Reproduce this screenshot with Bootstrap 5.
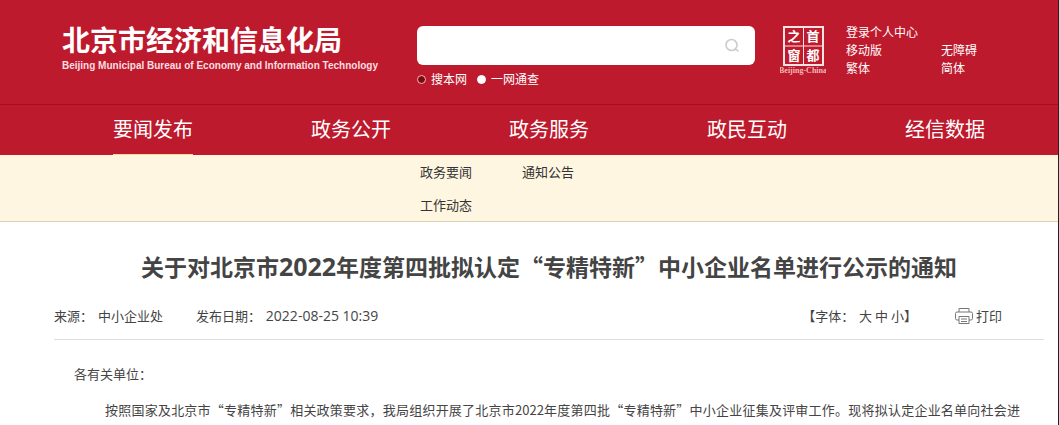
<!DOCTYPE html>
<html lang="zh-CN">
<head>
<meta charset="utf-8">
<meta name="viewport" content="width=device-width, initial-scale=1">
<title>北京市经济和信息化局</title>
<link rel="stylesheet" href="https://cdn.jsdelivr.net/npm/bootstrap@5.3.0/dist/css/bootstrap.min.css">
<style>
  body { font-family: "Noto Sans CJK SC", sans-serif; font-size: 13px; line-height: 18px; color: #444; border-right: 1px solid #222; min-height: 100vh; }
  a { color: inherit; text-decoration: none; }
  .page-gutter { padding-left: 54px; padding-right: 14px; }
  .site-head { background: #be1a2d; color: #fff; height: 105px; border-bottom: 1px solid #a50f1f; }
  .brand { width: 363px; padding: 18px 0 0 8px; }
  .brand-zh { font-size: 28px; line-height: 42px; font-weight: 700; }
  .brand-en { font: 700 10px/12px "Liberation Sans", Arial, sans-serif; color: #fbdfe0; white-space: nowrap; }
  .search-area { width: 338px; padding-top: 26px; }
  .search-box { height: 39px; border-radius: 6px; background: #fff; padding-right: 15px; }
  .search-box input { border: 0; outline: 0; background: transparent; height: 100%; padding: 0 12px; min-width: 0; }
  .search-box button { border: 0; background: none; padding: 0; line-height: 0; }
  .scope { font-size: 12px; line-height: 16px; margin-top: 6px; gap: 10px; }
  .scope label { display: flex; align-items: center; gap: 5px; }
  .scope input { appearance: none; width: 9px; height: 9px; margin: 0; border: 1px solid #fff; border-radius: 50%; background: #fff; }
  .scope input:checked { background: #7c0a12; border-color: #f6b7b0; }
  .seal { margin: 24px 0 0 25px; width: 46px; }
  .quick { margin: 23px 0 0 20px; font-size: 12px; line-height: 18px; display: grid; grid-template-columns: 95px auto; align-content: start; }
  .quick a:first-child { grid-column: span 2; }
  .main-nav { background: #be1a2d; color: #fff; font-size: 20px; line-height: 48px; }
  .main-nav a { display: inline-block; height: 50px; vertical-align: top; border-bottom: 1px solid transparent; }
  .main-nav a.active { border-color: #f3d9a0; }
  .sub-nav { background: #fef6e0; border-bottom: 1px solid #d9d3b4; height: 67px; color: #333; line-height: 33px; }
  .sub-grid { display: grid; grid-template-columns: 102px auto; justify-content: start; padding-left: 366px; }
  h1 { font-size: 23px; line-height: 34px; font-weight: 700; margin: 27px 0 0; }
  .year { font-family: "Open Sans", sans-serif; font-size: 25px; line-height: 1; }
  .meta { margin-top: 24px; padding: 0 42px 14px 0; border-bottom: 1px solid #ddd; }
  .source { margin-right: 33px; }
  .stamp { font-family: "Open Sans", sans-serif; font-size: 14px; margin-left: 2px; }
  .label-gap { margin-right: 2px; }
  .print { margin-left: 38px; gap: 3px; }
  .article { padding: 25px 24px 0 20px; }
  .article p { margin: 0 0 18px; }
  .lead-line { padding-left: 31px; text-align: justify; text-align-last: justify; white-space: nowrap; }
</style>
</head>
<body>
<header class="site-head page-gutter d-flex">
  <div class="brand flex-shrink-0">
    <div class="brand-zh">北京市经济和信息化局</div>
    <div class="brand-en">Beijing Municipal Bureau of Economy and Information Technology</div>
  </div>
  <form class="search-area flex-shrink-0">
    <div class="search-box d-flex align-items-center">
      <input class="flex-grow-1" type="text" aria-label="搜索">
      <button type="button" aria-label="搜索"><svg width="16" height="16" viewBox="0 0 16 16" fill="none" stroke="#ccc" stroke-width="1.6"><circle cx="7.500" cy="7" r="5.500"/><path d="M10.500 11.500h2l2 2"/></svg></button>
    </div>
    <div class="scope d-flex">
      <label><input type="radio" name="scope" checked>搜本网</label>
      <label><input type="radio" name="scope">一网通查</label>
    </div>
  </form>
  <svg class="seal flex-shrink-0" height="52" viewBox="0 0 46 52" fill="#fff" aria-label="首都之窗">
    <g fill="none" stroke="#fbe3e3"><rect x="4" y="3" width="39" height="38" stroke-width="2"/><path d="M23.500 3v38M4 22h39"/></g>
    <g font-family="Noto Sans CJK SC, sans-serif" font-size="13" font-weight="700" text-anchor="middle"><text x="14" y="17">之</text><text x="33" y="17">首</text><text x="14" y="36">窗</text><text x="33" y="36">都</text></g>
    <text x="23" y="49" text-anchor="middle" font-family="Liberation Serif, serif" font-size="8" font-weight="700" fill="#f3b9ba">Beijing-China</text>
  </svg>
  <nav class="quick"><a href="#">登录个人中心</a><a href="#">移动版</a><a href="#">无障碍</a><a href="#">繁体</a><a href="#">简体</a></nav>
</header>
<nav class="main-nav page-gutter">
  <div class="row g-0 text-center">
    <div class="col"><a class="active" href="#">要闻发布</a></div>
    <div class="col"><a href="#">政务公开</a></div>
    <div class="col"><a href="#">政务服务</a></div>
    <div class="col"><a href="#">政民互动</a></div>
    <div class="col"><a href="#">经信数据</a></div>
  </div>
</nav>
<nav class="sub-nav page-gutter">
  <div class="sub-grid"><a href="#">政务要闻</a><a href="#">通知公告</a><a href="#">工作动态</a></div>
</nav>
<main class="page-gutter">
  <h1 class="text-center">关于对北京市<span class="year">2022</span>年度第四批拟认定“专精特新”中小企业名单进行公示的通知</h1>
  <div class="meta d-flex">
    <span class="source"><span class="label-gap">来源：</span> 中小企业处</span>
    <span>发布日期： <time class="stamp" datetime="2022-08-25T10:39">2022-08-25 10:39</time></span>
    <span class="ms-auto"><span class="label-gap">【字体：</span> <a href="#">大</a> <a href="#">中</a> <a href="#">小</a>】</span>
    <a href="#" class="print d-flex align-items-center"><svg width="18" height="18" viewBox="0 0 18 18" fill="#fff" stroke="#777"><path d="M4 5V1.500h10V5"/><rect x=".5" y="5" width="17" height="8" rx="1.500"/><path d="M4 9.500h10v7H4zM6 12h6M6 14.500h6"/></svg>打印</a>
  </div>
  <article class="article">
    <p>各有关单位：</p>
    <p class="lead-line">按照国家及北京市“专精特新”相关政策要求，我局组织开展了北京市2022年度第四批“专精特新”中小企业征集及评审工作。现将拟认定企业名单向社会进</p>
  </article>
</main>
<script src="https://cdn.jsdelivr.net/npm/bootstrap@5.3.0/dist/js/bootstrap.bundle.min.js"></script>
</body>
</html>
